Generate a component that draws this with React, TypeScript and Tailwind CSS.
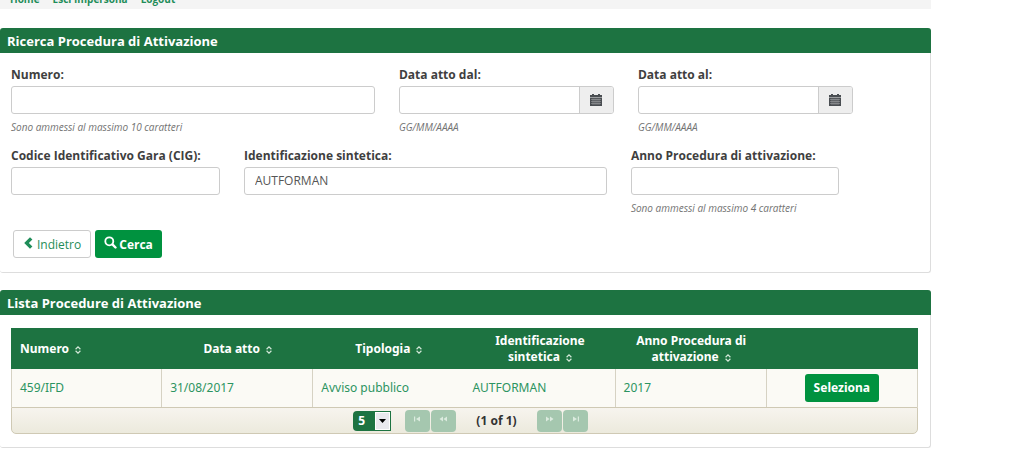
import { useState } from 'react';
import type { ReactNode } from 'react';

interface Procedura {
  numero: string;
  dataAtto: string;
  tipologia: string;
  identificazione: string;
  anno: string;
}

const PROCEDURE: Procedura[] = [
  { numero: '459/IFD', dataAtto: '31/08/2017', tipologia: 'Avviso pubblico', identificazione: 'AUTFORMAN', anno: '2017' },
];

const COLUMNS = ['Numero', 'Data atto', 'Tipologia', 'Identificazione sintetica', 'Anno Procedura di attivazione'];

const PAGER_ICONS = {
  first: 'M1 1.500h1.200v5H1zM7 1.500v5L3 4z',
  prev: 'M4 1.500v5L.5 4zM8 1.500v5L4.500 4z',
  next: 'M1 1.500v5L4.500 4zM5 1.500v5L8.500 4z',
  last: 'M2 1.500v5L6 4zM6.800 1.500H8v5H6.800z',
};

function Panel({ title, children }: { title: string; children: ReactNode }) {
  return (
    <section className="rounded-[3px] border border-l-0 border-t-0 border-[#dddddd] bg-white">
      <h2 className="-mr-px h-[25px] rounded-t-[3px] bg-[#1d7341] px-[7px] text-[13px] leading-[26px] font-bold text-white">{title}</h2>
      {children}
    </section>
  );
}

function Field({ id, label, hint, date, value }: { id: string; label: string; hint?: string; date?: boolean; value?: string }) {
  return (
    <div className="min-w-0">
      <label htmlFor={id} className="mb-[2px] block text-[12px] leading-[18px] font-bold whitespace-nowrap text-[#3f3f3f]">{label}</label>
      <div className="flex h-7 overflow-hidden rounded-[3px] border border-[#cccccc] bg-white">
        <input id={id} type="text" defaultValue={value} className="min-w-0 flex-1 px-[10px] text-[12px] text-[#555555] outline-none" />
        {date && (
          <button type="button" aria-label={`Calendario ${label}`} className="flex w-[34px] shrink-0 cursor-pointer items-center justify-center border-l border-[#cccccc] bg-[#eeeeee]">
            <CalendarIcon />
          </button>
        )}
      </div>
      {hint && <p className="mt-1 text-[10px] leading-[18px] whitespace-nowrap text-[#737373] italic">{hint}</p>}
    </div>
  );
}

function CalendarIcon() {
  return (
    <svg width="12" height="12" viewBox="0 0 12 12" aria-hidden="true">
      <path fill="#4a4e52" d="M0 1h2V0h2v1h4V0h2v1h2v2H0zM0 3.500h12V12H0z" />
      <path stroke="#a9abad" strokeWidth=".5" d="M1 5.500h10M1 7.500h10M1 9.500h10M3 4.500v6.500M5 4.500v6.500M7 4.500v6.500M9 4.500v6.500" />
    </svg>
  );
}

function SortIcon() {
  return (
    <svg width="6" height="8" viewBox="0 0 7 9" className="ml-[6px] inline-block align-[-1px]" aria-hidden="true">
      <path fill="none" stroke="#d3e8d8" strokeWidth="1.400" d="M.7 3.600L3.500.9l2.800 2.700M.7 5.400l2.800 2.700 2.800-2.700" />
    </svg>
  );
}

function PagerButton({ label, icon, disabled }: { label: string; icon: keyof typeof PAGER_ICONS; disabled: boolean }) {
  return (
    <button type="button" aria-label={label} disabled={disabled} className="flex h-[22px] w-[25px] items-center justify-center rounded-[4px] bg-[#a5c7af] pb-[3px]">
      <svg width="9" height="8" viewBox="0 0 9 8" aria-hidden="true">
        <path fill="#dcebdf" d={PAGER_ICONS[icon]} />
      </svg>
    </button>
  );
}

export default function App() {
  const [rows, setRows] = useState('5');

  return (
    <div className="w-10/11 bg-white font-['Open_Sans',sans-serif]">
      <nav className="flex h-[9px] items-end gap-[13px] overflow-hidden bg-[#f4f4f4] px-[10px] pb-[2px] text-[10px] leading-4 font-bold text-[#1f8d59]">
        <a href="#home">Home</a>
        <a href="#esci">Esci Impersona</a>
        <a href="#logout">Logout</a>
      </nav>

      <main className="mt-[19px] flex flex-col gap-[17px]">
        <Panel title="Ricerca Procedura di Attivazione">
          <form className="pt-[13px] pr-3 pb-[14px] pl-[11px]" onSubmit={e => e.preventDefault()}>
            <div className="grid grid-cols-[364fr_215fr_215fr_41fr] gap-x-6">
              <Field id="numero" label="Numero:" hint="Sono ammessi al massimo 10 caratteri" />
              <Field id="dal" label="Data atto dal:" hint="GG/MM/AAAA" date />
              <Field id="al" label="Data atto al:" hint="GG/MM/AAAA" date />
            </div>
            <div className="mt-[11px] grid grid-cols-[209fr_363fr_208fr_55fr] gap-x-6">
              <Field id="cig" label="Codice Identificativo Gara (CIG):" />
              <Field id="sintetica" label="Identificazione sintetica:" value="AUTFORMAN" />
              <Field id="anno" label="Anno Procedura di attivazione:" hint="Sono ammessi al massimo 4 caratteri" />
            </div>
            <div className="mt-[13px] flex gap-1 px-[2px]">
              <button type="button" className="flex h-7 cursor-pointer items-center gap-1 rounded-[3px] border border-[#cccccc] bg-white px-[9px] pt-px text-[12px] text-[#1f8d59]">
                <svg width="10" height="12" viewBox="0 0 10 12" className="mb-1" aria-hidden="true">
                  <path fill="#1f8d59" d="M7 .3L9.400 2.600 5.900 6l3.500 3.400L7 11.700 1.200 6z" />
                </svg>
                Indietro
              </button>
              <button type="submit" className="flex h-7 cursor-pointer items-center gap-[2px] rounded-[3px] bg-[#00923f] px-[9px] pt-px text-[12px] font-bold text-white">
                <svg width="13" height="13" viewBox="0 0 13 13" className="mb-1" aria-hidden="true">
                  <circle cx="5.300" cy="5.300" r="4" fill="none" stroke="#fff" strokeWidth="1.800" />
                  <path stroke="#fff" strokeWidth="2.400" strokeLinecap="round" d="M8.700 8.700l2.800 2.800" />
                </svg>
                Cerca
              </button>
            </div>
          </form>
        </Panel>

        <Panel title="Lista Procedure di Attivazione">
          <div className="py-[13px] pr-3 pl-[11px] font-['Noto_Sans',sans-serif]">
            <table className="w-full table-fixed border-separate border-spacing-0 text-[12px]">
              <thead className="bg-[#1d7341] text-white">
                <tr className="h-[41px]">
                  {COLUMNS.map((c, i) => (
                    <th key={c} scope="col" className={`px-[9px] leading-4 font-bold ${i === 0 ? 'text-left' : 'text-center'}`}>
                      {c}<SortIcon />
                    </th>
                  ))}
                  <td />
                </tr>
              </thead>
              <tbody className="bg-[#fbfaf5] text-[#2c9461]">
                {PROCEDURE.map(p => (
                  <tr key={p.numero} className="h-[38px]">
                    <td className="border-x border-[#d6d2c3] px-2">{p.numero}</td>
                    <td className="border-r border-[#d6d2c3] px-2">{p.dataAtto}</td>
                    <td className="px-2">{p.tipologia}</td>
                    <td className="border-r border-[#d6d2c3] px-2">{p.identificazione}</td>
                    <td className="border-r border-[#d6d2c3] px-2">{p.anno}</td>
                    <td className="border-r border-[#d6d2c3] text-center">
                      <button type="button" className="h-7 cursor-pointer rounded-[3px] bg-[#00923f] px-[9px] align-middle text-[12px] font-bold text-white">Seleziona</button>
                    </td>
                  </tr>
                ))}
              </tbody>
            </table>

            <div className="flex h-[27px] items-center justify-center rounded-b-[5px] border border-[#cfc9b4] bg-linear-to-b from-[#f7f4ee] to-[#eceadd] pl-3 text-[12px] text-[#333333]">
              <div className="relative mr-[14px]">
                <select
                  aria-label="Righe per pagina"
                  value={rows}
                  onChange={e => setRows(e.target.value)}
                  className="block h-5 w-[38px] appearance-none rounded-l-[4px] bg-[#1d7341] pl-[5px] text-[12px] leading-5 font-bold text-white"
                >
                  <option>5</option>
                  <option>10</option>
                  <option>20</option>
                </select>
                <span className="pointer-events-none absolute inset-y-px right-px flex w-[15px] items-center justify-center border border-white bg-[#e9e9ee]">
                  <svg width="7" height="4" viewBox="0 0 7 4" aria-hidden="true"><path d="M0 0h7L3.500 4z" /></svg>
                </span>
              </div>
              <div className="flex gap-px">
                <PagerButton label="Prima pagina" icon="first" disabled />
                <PagerButton label="Pagina precedente" icon="prev" disabled />
              </div>
              <span className="mx-5 font-bold">(1 of 1)</span>
              <div className="flex gap-px">
                <PagerButton label="Pagina successiva" icon="next" disabled />
                <PagerButton label="Ultima pagina" icon="last" disabled />
              </div>
            </div>
          </div>
        </Panel>
      </main>
    </div>
  );
}
